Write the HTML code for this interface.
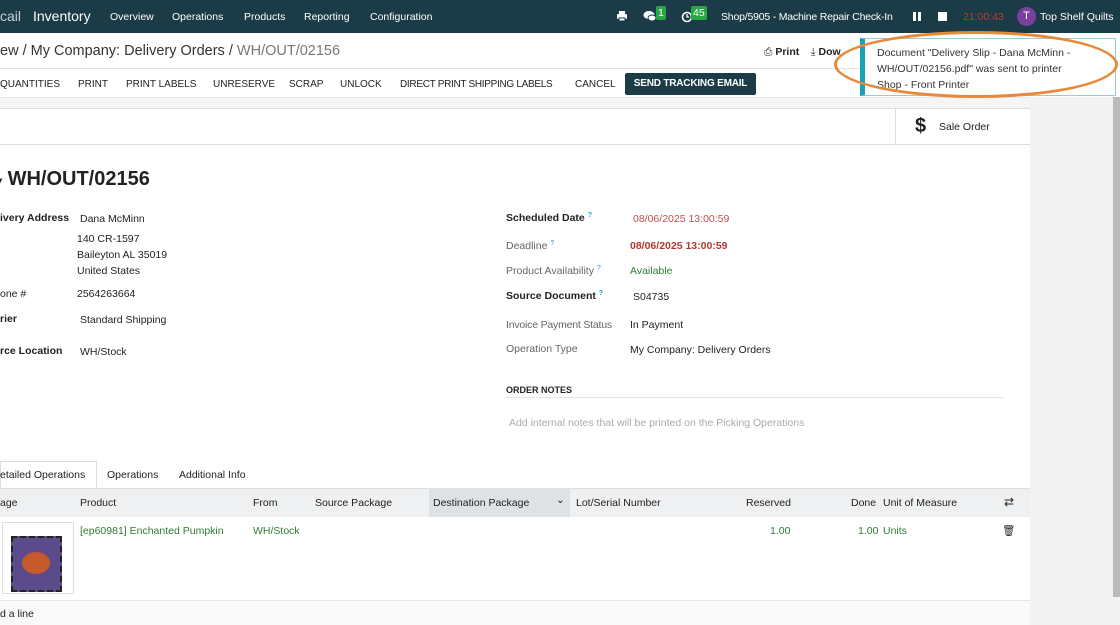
<!DOCTYPE html><html><head><style>
*{box-sizing:border-box;margin:0;padding:0}
body{width:1120px;height:625px;overflow:hidden;font-family:"Liberation Sans",sans-serif;font-size:10.5px;color:#222;background:#fff;position:relative}
.a{position:absolute;white-space:nowrap}
.top{position:absolute;left:0;top:0;width:1120px;height:33px;background:#1b3b47;color:#fff}
.top .a{top:11px;font-size:10.5px}
.badge{background:#28a745;color:#fff;font-size:8px;padding:1px 2px;border-radius:2px}
.lbl{color:#666}
.b{font-weight:bold;color:#222}
.red{color:#c0392b}
.grn{color:#2e7d32}
.q{color:#17a2b8;font-size:7px;vertical-align:top}
.btn{top:79px;font-size:10px}
</style></head><body>
<div class="top">
<div class="a" style="left:0;top:8px;font-size:14px;color:#ccd">cail</div>
<div class="a" style="left:33px;top:8px;font-size:14px">Inventory</div>
<div class="a" style="left:110px">Overview</div>
<div class="a" style="left:172px">Operations</div>
<div class="a" style="left:244px">Products</div>
<div class="a" style="left:304px">Reporting</div>
<div class="a" style="left:370px">Configuration</div>
<svg class="a" style="left:616px;top:10px" width="12" height="12" viewBox="0 0 12 12"><rect x="3" y="1" width="6" height="3" fill="#fff"/><rect x="1" y="4" width="10" height="5" rx="1" fill="#fff"/><rect x="3" y="8" width="6" height="3" fill="#fff" stroke="#1b3b47"/></svg>
<svg class="a" style="left:643px;top:10px" width="14" height="12" viewBox="0 0 14 12"><ellipse cx="6" cy="5" rx="5.5" ry="4" fill="#fff"/><ellipse cx="9" cy="8" rx="4" ry="3" fill="#fff" stroke="#1b3b47"/></svg><span class="a badge" style="left:656px;top:6px">1</span>
<svg class="a" style="left:681px;top:11px" width="12" height="12" viewBox="0 0 12 12"><circle cx="6" cy="6" r="4.5" fill="none" stroke="#fff" stroke-width="1.6"/><path d="M6 3v3h2" stroke="#fff" stroke-width="1.3" fill="none"/></svg><span class="a badge" style="left:691px;top:6px">45</span>
<div class="a" style="left:721px;letter-spacing:-0.2px">Shop/5905 - Machine Repair Check-In</div>
<div class="a" style="left:913px;top:12px;width:3px;height:9px;background:#fff"></div><div class="a" style="left:918px;top:12px;width:3px;height:9px;background:#fff"></div>
<div class="a" style="left:938px;top:12px;width:9px;height:9px;background:#fff"></div>
<div class="a" style="left:963px;color:#c0392b">21:00:43</div>
<div class="a" style="left:1017px;top:7px;width:19px;height:19px;border-radius:50%;background:#7b3fa0;text-align:center;line-height:19px;font-size:11px">T</div>
<div class="a" style="left:1040px">Top Shelf Quilts</div>
</div>
<div class="a" style="left:0;top:43px;font-size:14.5px;color:#333">ew / My Company: Delivery Orders / <span style="color:#777">WH/OUT/02156</span></div>
<div class="a" style="left:764px;top:46px;font-size:10.5px">⎙ <b>Print</b> &nbsp;&nbsp; ⤓ <b>Dow</b></div>
<div class="a" style="left:0;top:68px;width:1030px;height:1px;background:#e5e5e5"></div>
<div class="a btn" style="left:0">QUANTITIES</div>
<div class="a btn" style="left:78px">PRINT</div>
<div class="a btn" style="left:126px">PRINT LABELS</div>
<div class="a btn" style="left:213px">UNRESERVE</div>
<div class="a btn" style="left:289px">SCRAP</div>
<div class="a btn" style="left:340px">UNLOCK</div>
<div class="a btn" style="left:400px;letter-spacing:-0.3px">DIRECT PRINT SHIPPING LABELS</div>
<div class="a btn" style="left:575px">CANCEL</div>
<div class="a" style="left:625px;top:73px;width:131px;height:22px;background:#1b3b47;color:#fff;font-weight:bold;font-size:10px;text-align:center;line-height:22px;border-radius:2px;letter-spacing:-0.2px">SEND TRACKING EMAIL</div>
<div class="a" style="left:0;top:97px;width:1030px;height:11px;background:#f5f5f5;border-top:1px solid #e5e5e5"></div>
<div class="a" style="left:1030px;top:97px;width:90px;height:528px;background:#f3f3f3"></div>
<div class="a" style="left:1113px;top:97px;width:7px;height:500px;background:#bbb"></div>
<div class="a" style="left:0;top:108px;width:1030px;height:1px;background:#ddd"></div>
<div class="a" style="left:0;top:144px;width:1030px;height:1px;background:#ddd"></div>
<div class="a" style="left:895px;top:108px;width:1px;height:36px;background:#ddd"></div>
<div class="a" style="left:915px;top:115px;font-size:20px;font-weight:bold">$</div>
<div class="a" style="left:939px;top:121px">Sale Order</div>
<div class="a" style="left:860px;top:38px;width:256px;height:58px;background:#fff;border:1px solid #9cc;border-left:5px solid #17a2b8"></div>
<div class="a" style="left:877px;top:45px;line-height:16px;font-size:10.5px;color:#333;white-space:normal;width:200px">Document "Delivery Slip - Dana McMinn - WH/OUT/02156.pdf" was sent to printer Shop - Front Printer</div>
<div class="a" style="left:834px;top:31px;width:284px;height:67px;border:3px solid #e8893a;border-radius:50%"></div>
<div class="a" style="left:-4px;top:168px;font-size:20px;font-weight:bold"><span style="font-size:12px">▾</span> WH/OUT/02156</div>
<div class="a b" style="left:0;top:212px">ivery Address</div>
<div class="a" style="left:80px;top:213px">Dana McMinn</div>
<div class="a" style="left:77px;top:231px;line-height:16px">140 CR-1597<br>Baileyton AL 35019<br>United States</div>
<div class="a" style="left:0;top:288px">one #</div><div class="a" style="left:77px;top:288px">2564263664</div>
<div class="a b" style="left:0;top:313px">rier</div><div class="a" style="left:80px;top:314px">Standard Shipping</div>
<div class="a b" style="left:0;top:345px">rce Location</div><div class="a" style="left:80px;top:346px">WH/Stock</div>
<div class="a b" style="left:506px;top:212px">Scheduled Date <span class="q">?</span></div><div class="a red" style="left:633px;top:213px;color:#c0504d">08/06/2025 13:00:59</div>
<div class="a lbl" style="left:506px;top:240px">Deadline <span class="q">?</span></div><div class="a red b" style="left:630px;top:240px;color:#b03a2e">08/06/2025 13:00:59</div>
<div class="a lbl" style="left:506px;top:265px">Product Availability <span class="q">?</span></div><div class="a grn" style="left:630px;top:265px">Available</div>
<div class="a b" style="left:506px;top:290px">Source Document <span class="q">?</span></div><div class="a" style="left:633px;top:291px">S04735</div>
<div class="a lbl" style="left:506px;top:319px;letter-spacing:-0.2px">Invoice Payment Status</div><div class="a" style="left:630px;top:319px">In Payment</div>
<div class="a lbl" style="left:506px;top:343px">Operation Type</div><div class="a" style="left:630px;top:344px">My Company: Delivery Orders</div>
<div class="a b" style="left:506px;top:385px;font-size:9px">ORDER NOTES</div>
<div class="a" style="left:506px;top:397px;width:497px;height:1px;background:#e5e5e5"></div>
<div class="a" style="left:509px;top:417px;color:#aaa">Add internal notes that will be printed on the Picking Operations</div>
<div class="a" style="left:0;top:461px;width:97px;height:28px;border:1px solid #ddd;border-bottom:none;background:#fff"></div>
<div class="a" style="left:0;top:469px">etailed Operations</div>
<div class="a" style="left:107px;top:469px">Operations</div>
<div class="a" style="left:179px;top:469px">Additional Info</div>
<div class="a" style="left:0;top:488px;width:1030px;height:29px;background:#eef0f1;border-top:1px solid #ddd"></div>
<div class="a" style="left:429px;top:488px;width:141px;height:29px;background:#dfe2e4"></div>
<div class="a" style="left:0;top:497px">age</div>
<div class="a" style="left:80px;top:497px">Product</div>
<div class="a" style="left:253px;top:497px">From</div>
<div class="a" style="left:315px;top:497px">Source Package</div>
<div class="a" style="left:433px;top:497px">Destination Package</div>
<div class="a" style="left:556px;top:494px">⌄</div>
<div class="a" style="left:576px;top:497px">Lot/Serial Number</div>
<div class="a" style="left:746px;top:497px">Reserved</div>
<div class="a" style="left:851px;top:497px">Done</div>
<div class="a" style="left:883px;top:497px">Unit of Measure</div>
<div class="a" style="left:1004px;top:495px;font-size:12px">⇄</div>
<div class="a" style="left:2px;top:522px;width:72px;height:72px;border:1px solid #ddd"></div>
<div class="a" style="left:11px;top:536px;width:51px;height:56px;background:#5b4b8a;border:2px dashed #222"></div>
<div class="a" style="left:22px;top:552px;width:28px;height:22px;border-radius:50%;background:#c65a2d"></div>
<div class="a grn" style="left:80px;top:525px">[ep60981] Enchanted Pumpkin</div>
<div class="a grn" style="left:253px;top:525px">WH/Stock</div>
<div class="a grn" style="left:770px;top:525px">1.00</div>
<div class="a grn" style="left:858px;top:525px">1.00</div>
<div class="a grn" style="left:883px;top:525px">Units</div>
<div class="a" style="left:1002px;top:524px">🗑</div>
<div class="a" style="left:0;top:600px;width:1030px;height:25px;background:#fafafa;border-top:1px solid #e5e5e5"></div>
<div class="a" style="left:0;top:608px">d a line</div>
</body></html>
